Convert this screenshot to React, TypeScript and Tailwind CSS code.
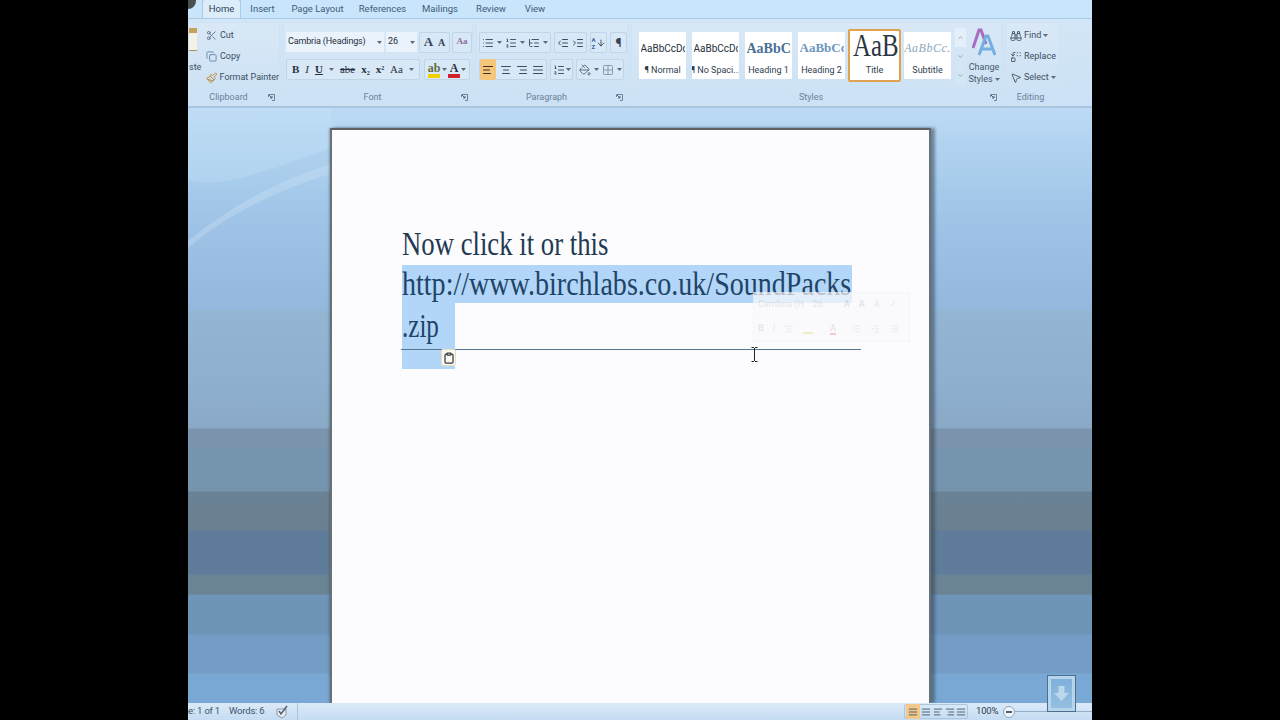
import React from 'react';
import {
  AlignCenter,
  AlignJustify,
  AlignLeft,
  AlignRight,
  ArrowDown,
  Binoculars,
  ChevronDown,
  ChevronUp,
  Clipboard,
  Copy,
  Grid2x2,
  IndentDecrease,
  IndentIncrease,
  List,
  ListOrdered,
  ListTree,
  MousePointer2,
  PaintBucket,
  Paintbrush,
  Replace,
  Scissors,
} from 'lucide-react';

const tabs = ['Home', 'Insert', 'Page Layout', 'References', 'Mailings', 'Review', 'View'];

const Caret = () => (
  <svg width="5" height="3" viewBox="0 0 5 3" className="shrink-0">
    <path d="M0 0h5L2.500 3z" fill="#5a6b80" />
  </svg>
);

const Launcher = () => (
  <svg width="7" height="7" viewBox="0 0 7 7" className="shrink-0">
    <path d="M0.500 3V0.500H6.500V6.500H4" fill="none" stroke="#6f8298" />
    <path d="M1 1l3 3M4 2v2H2" fill="none" stroke="#52667c" />
  </svg>
);

const Group = ({
  label,
  width,
  launcher,
  children,
}: {
  label: string;
  width: string;
  launcher?: boolean;
  children: React.ReactNode;
}) => (
  <div className={`${width} h-[83px] shrink-0 flex flex-col rounded-[3px] border border-[#cfe2f2] bg-gradient-to-b from-[#d9e8f6] to-[#cbe1f5]`}>
    <div className="flex-1 min-h-0">{children}</div>
    <div className="h-[16px] pt-[3px] flex items-center text-[9px] text-[#6c8199] pr-[4px]">
      <span className="flex-1 text-center">{label}</span>
      {launcher && <Launcher />}
    </div>
  </div>
);

const ClipRow = ({
  icon,
  text,
  gap = 'gap-[3px]',
  caret,
}: {
  icon: React.ReactNode;
  text: string;
  gap?: string;
  caret?: boolean;
}) => (
  <div className={`flex items-center h-[21px] text-[9px] text-[#3c4e62] ${gap}`}>
    {icon}
    <span className="whitespace-nowrap">{text}</span>
    {caret && <Caret />}
  </div>
);

const ToolBox = ({ className, children }: { className: string; children: React.ReactNode }) => (
  <div className={`h-[21px] flex items-center rounded-[2px] border border-[#c0d5e8] bg-[#d9e8f6] ${className}`}>{children}</div>
);

const StyleTile = ({
  sample,
  label,
  sampleClass,
}: {
  sample: string;
  label: string;
  sampleClass: string;
}) => (
  <div className="w-[47px] h-[47px] shrink-0 bg-white flex flex-col items-center overflow-hidden">
    <div className={`h-[32px] w-[44px] flex items-center overflow-hidden whitespace-nowrap ${sampleClass}`}>{sample}</div>
    <div className="text-[9px] leading-[12px] text-[#2e3d4f] whitespace-nowrap">{label}</div>
  </div>
);

const Ribbon = () => (
  <div className="shrink-0">
    <div className="h-[19px] flex items-end bg-[#c9e5fb] border-b border-[#aacbe6] relative">
      <div className="absolute left-0 top-0 w-[8px] h-[9px] rounded-br-full bg-[#4a4f4f]" />
      <div className="ml-[14px] h-[19px] w-[39px] flex items-center justify-center rounded-t-[3px] bg-[#dcecf9] border border-b-0 border-[#a9cbe6] text-[9.500px] text-[#2c4058]">
        Home
      </div>
      {tabs.slice(1).map((tab, i) => (
        <div
          key={tab}
          className={`h-[18px] flex items-center justify-center text-[9.500px] text-[#3f5b78] ${
            ['w-[43px]', 'w-[67px]', 'w-[63px]', 'w-[52px]', 'w-[50px]', 'w-[38px]'][i]
          }`}
        >
          {tab}
        </div>
      ))}
    </div>
    <div className="h-[89px] flex gap-[3px] pt-[3px] bg-gradient-to-b from-[#d3e6f7] to-[#cbe1f5] border-b-2 border-[#a9c5dd]">
      <Group label="Clipboard" width="w-[92px]" launcher>
        <div className="relative h-full">
          <div className="absolute left-0 top-[5px] w-[8px] h-[23px] bg-[#f4f1e6] border-b border-[#a89060]">
            <div className="h-[5px] bg-[#c9a05a]" />
          </div>
          <div className="absolute left-0 top-[38px] text-[9px] text-[#3c4e62]">ste</div>
          <div className="pl-[17px] pt-[2px]">
            <ClipRow icon={<Scissors size={11} color="#5f6f96" />} text="Cut" />
            <ClipRow icon={<Copy size={11} color="#6b87a8" />} text="Copy" />
            <ClipRow icon={<Paintbrush size={12} color="#b68a33" />} text="Format Painter" gap="gap-[2px]" />
          </div>
        </div>
      </Group>

      <Group label="Font" width="w-[190px]" launcher>
        <div className="pl-[2px] pt-[9px] flex flex-col gap-[7px]">
          <div className="flex items-center gap-[2px] h-[20px]">
            <div className="w-[98px] h-[20px] bg-[#eaf3fb] flex items-center justify-between px-[2px] text-[9px] tracking-[-0.15px] text-[#25303c]">
              <span className="whitespace-nowrap">Cambria (Headings)</span>
              <Caret />
            </div>
            <div className="w-[31px] h-[20px] bg-[#eaf3fb] flex items-center justify-between px-[2px] text-[9px] text-[#25303c]">
              <span>26</span>
              <Caret />
            </div>
            <ToolBox className="w-[31px] justify-center gap-[5px] font-['Liberation_Serif',serif] text-[#33435a]">
              <span className="text-[13px] font-bold">A</span>
              <span className="text-[10px] font-bold">A</span>
            </ToolBox>
            <ToolBox className="w-[20px] justify-center font-['Liberation_Serif',serif] text-[9px] font-bold text-[#8a6f9b]">
              Aa
            </ToolBox>
          </div>
          <div className="flex gap-[4px]">
            <ToolBox className="w-[134px] justify-around px-[2px] font-['Liberation_Serif',serif] text-[11px] text-[#26323f]">
              <b>B</b>
              <i>I</i>
              <b className="underline">U</b>
              <Caret />
              <span className="line-through">abe</span>
              <b>x<sub className="text-[6px]">2</sub></b>
              <b>x<sup className="text-[6px]">2</sup></b>
              <span>Aa</span>
              <Caret />
            </ToolBox>
            <ToolBox className="w-[46px] justify-around px-[2px] font-['Liberation_Serif',serif] text-[12px]">
              <span className="flex flex-col items-center leading-[12px]">
                <span className="text-[#5d6e3c] font-bold">ab</span>
                <span className="w-[12px] h-[4px] bg-[#f0d000]" />
              </span>
              <Caret />
              <span className="flex flex-col items-center leading-[12px]">
                <span className="text-[#26323f] font-bold">A</span>
                <span className="w-[12px] h-[4px] bg-[#d0202c]" />
              </span>
              <Caret />
            </ToolBox>
          </div>
        </div>
      </Group>

      <Group label="Paragraph" width="w-[152px]" launcher>
        <div className="pl-[2px] pt-[9px] flex flex-col gap-[5px]">
          <div className="flex gap-[3px]">
            <ToolBox className="w-[72px] justify-around">
              <List size={12} color="#44586e" />
              <Caret />
              <ListOrdered size={12} color="#44586e" />
              <Caret />
              <ListTree size={12} color="#44586e" />
              <Caret />
            </ToolBox>
            <ToolBox className="w-[33px] justify-around">
              <IndentDecrease size={12} color="#3b4c60" />
              <IndentIncrease size={12} color="#3b4c60" />
            </ToolBox>
            <ToolBox className="w-[17px] justify-center">
              <span className="flex flex-col text-[6px] leading-[7px] font-bold text-[#3b66a0]">
                <span>A</span>
                <span>Z</span>
              </span>
              <ArrowDown size={10} color="#333f4e" />
            </ToolBox>
            <ToolBox className="w-[17px] justify-center text-[12px] font-bold text-[#3a4656]">¶</ToolBox>
          </div>
          <div className="flex gap-[3px] pt-[1px]">
            <ToolBox className="w-[68px] justify-between pr-[2px]">
              <span className="w-[16px] h-[21px] flex items-center justify-center rounded-[2px] bg-[#f5c679]">
                <AlignLeft size={12} color="#3b3222" />
              </span>
              <AlignCenter size={12} color="#3b4c60" />
              <AlignRight size={12} color="#3b4c60" />
              <AlignJustify size={12} color="#3b4c60" />
            </ToolBox>
            <ToolBox className="w-[23px] justify-center gap-[1px]">
              <ListOrdered size={12} color="#44586e" />
              <Caret />
            </ToolBox>
            <ToolBox className="w-[48px] justify-around">
              <PaintBucket size={12} color="#59708a" />
              <Caret />
              <Grid2x2 size={12} color="#8a99aa" />
              <Caret />
            </ToolBox>
          </div>
        </div>
      </Group>

      <Group label="Styles" width="w-[371px]" launcher>
        <div className="flex h-full pl-[7px] pt-[6px]">
          <div className="flex gap-[6px] h-[50px] pt-[3px]">
            <StyleTile sample="AaBbCcDc" label="¶ Normal" sampleClass="text-[10px] text-[#26303c]" />
            <StyleTile sample="AaBbCcDc" label="¶ No Spaci..." sampleClass="text-[10px] text-[#26303c]" />
            <StyleTile
              sample="AaBbCc"
              label="Heading 1"
              sampleClass="text-[14px] font-bold font-['Liberation_Serif',serif] text-[#4a6f95]"
            />
            <StyleTile
              sample="AaBbCc"
              label="Heading 2"
              sampleClass="text-[13px] font-bold font-['Liberation_Serif',serif] text-[#6d97c1]"
            />
          </div>
          <div className="w-[53px] h-[53px] ml-[3px] shrink-0 border-2 border-[#e0a24e] rounded-[2px] bg-white flex flex-col items-center overflow-hidden">
            <div className="h-[30px] w-[47px] pl-[2px] overflow-hidden whitespace-nowrap font-['Liberation_Serif',serif] text-[31px] leading-[30px] text-[#2a3644]">
              <span className="inline-block origin-left scale-x-[0.8]">AaB</span>
            </div>
            <div className="text-[9px] leading-[18px] text-[#2e3d4f]">Title</div>
          </div>
          <div className="pl-[3px] pt-[3px] h-[50px] shrink-0">
            <div className="w-[47px] h-[47px] bg-white flex flex-col items-center overflow-hidden">
              <div className="h-[32px] flex items-center whitespace-nowrap font-['Liberation_Serif',serif] italic text-[12px] tracking-[0.5px] text-[#8aa8c0]">
                AaBbCc.
              </div>
              <div className="text-[9px] leading-[12px] text-[#2e3d4f]">Subtitle</div>
            </div>
          </div>
          <div className="ml-[4px] mt-[-1px] w-[11px] h-[57px] shrink-0 flex flex-col">
            <div className="h-[19px] flex items-center justify-center bg-[#e4eff9]"><ChevronUp size={7} color="#6d8097" /></div>
            <div className="h-[19px] flex items-center justify-center bg-[#d4e5f5]"><ChevronDown size={7} color="#6d8097" /></div>
            <div className="h-[19px] flex items-center justify-center bg-[#d4e5f5]"><ChevronDown size={7} color="#6d8097" /></div>
          </div>
          <div className="w-[36px] shrink-0 flex flex-col items-center text-[9px] leading-[12px] text-[#45586c]">
            <svg width="24" height="29" viewBox="0 0 24 29" className="mt-[-1px]">
              <path d="M1 20L7 2h2l5 14" fill="none" stroke="#a86cc0" strokeWidth="3" />
              <path d="M7 27L14 8h2l7 19M10 21h10" fill="none" stroke="#76aede" strokeWidth="3" />
            </svg>
            <span className="mt-[4px]">Change</span>
            <span className="flex items-center gap-[2px]">Styles <Caret /></span>
          </div>
        </div>
      </Group>

      <Group label="Editing" width="w-[55px]">
        <div className="pl-[4px] pt-[2px]">
          <ClipRow icon={<Binoculars size={12} color="#4a5a6c" />} text="Find" gap="gap-[2px]" caret />
          <ClipRow icon={<Replace size={12} color="#4f5f66" />} text="Replace" gap="gap-[2px]" />
          <ClipRow icon={<MousePointer2 size={12} color="#55606e" />} text="Select" gap="gap-[2px]" caret />
        </div>
      </Group>
    </div>
  </div>
);

const MiniToolbar = () => (
  <div className="absolute left-[421px] top-[162px] w-[157px] h-[50px] bg-[#fafafc] border border-[#f3f3f6] opacity-70 flex flex-col justify-around px-[4px] text-[9px] text-[#dcdde2]">
    <div className="flex gap-[9px] whitespace-nowrap">
      <span>Cambria (H</span>
      <span>26</span>
      <b className="ml-[12px]">A</b>
      <b>A</b>
      <span>A</span>
      <span>✓</span>
    </div>
    <div className="flex items-center gap-[9px]">
      <b>B</b>
      <i>I</i>
      <AlignCenter size={10} color="#dcdde2" />
      <span className="w-[10px] h-[10px] border-b-2 border-[#ece7a8]" />
      <span className="ml-[8px] text-[#e6c8d0] border-b-2 border-[#efb4bc] leading-[10px]">A</span>
      <IndentDecrease size={10} color="#dcdde2" className="ml-[6px]" />
      <IndentIncrease size={10} color="#dcdde2" />
      <List size={10} color="#dcdde2" />
    </div>
  </div>
);

const Page = () => (
  <div className="relative ml-[142px] w-[601px] h-[575px] shrink-0 bg-[#fcfbfd] border-t-2 border-l-2 border-r-2 border-t-[#5c6064] border-l-[#6b7074] border-r-[#6b7074] shadow-[4px_0_3px_rgba(50,70,90,0.55),-1px_0_2px_rgba(50,70,90,0.4)]">
    <div className="pl-[70px] pt-[95px] w-[530px] font-['Liberation_Serif',serif] text-[33px] text-[#1f3a52]">
      <div className="h-[39.500px] leading-[39.500px] whitespace-nowrap">
        <span className="inline-block origin-left scale-x-[0.81]">Now click it or this</span>
      </div>
      <div className="w-[450px] h-[38px] leading-[38px] bg-[#b2d6f7] whitespace-nowrap text-[#1f4468]">
        <span className="inline-block origin-left scale-x-[0.85]">http://www.birchlabs.co.uk/SoundPacks</span>
      </div>
      <div className="w-[53px] h-[46px] leading-[46px] bg-[#b2d6f7] text-[#1f4468]">
        <span className="inline-block origin-left scale-x-[0.76]">.zip</span>
      </div>
      <div className="w-[53px] h-[20px] bg-[#b2d6f7]" />
    </div>
    {/* overlays: rule under the text, paste options, mini toolbar and the text cursor */}
    <div className="absolute left-[69px] top-[219px] w-[460px] h-px bg-[#56788f]" />
    <div className="absolute left-[109px] top-[219px] w-[15px] h-[17px] bg-[#fbf8ef] border border-[#e8dcc0] rounded-[2px] flex items-center justify-center">
      <Clipboard size={12} color="#333b45" strokeWidth={2.500} />
    </div>
    <MiniToolbar />
    <svg width="7" height="15" viewBox="0 0 7 15" className="absolute left-[419px] top-[217px]">
      <path d="M0.500 0.500h2.500M4 0.500h2.500M3.500 1v13M0.500 14.500h2.500M4 14.500h2.500" fill="none" stroke="#222" />
    </svg>
  </div>
);

const StatusBar = () => (
  <div className="h-[17px] shrink-0 flex items-center bg-gradient-to-b from-[#dbeaf8] to-[#c4dcf2] text-[9.500px] tracking-[-0.2px] text-[#3f556c] overflow-hidden">
    <span className="w-[41px] whitespace-nowrap">e: 1 of 1</span>
    <span className="w-[46px] whitespace-nowrap">Words: 6</span>
    <svg width="14" height="14" viewBox="0 0 14 14" className="shrink-0">
      <path d="M2 4h9v6l-4 3-5-3z" fill="#e7eef5" stroke="#8b98a6" />
      <path d="M4 6l2 3 6-8" fill="none" stroke="#55606e" strokeWidth="1.500" />
    </svg>
    <span className="ml-[8px] w-px h-full bg-[#aac6de]" />
    <div className="flex-1" />
    <div className="w-[64px] h-[15px] flex items-center justify-around rounded-[2px] border border-[#aec5db] text-[#3a4a5c]">
      <span className="h-[15px] w-[14px] flex items-center justify-center bg-[#f2c98a]"><AlignJustify size={10} color="#3a4a5c" /></span>
      <AlignJustify size={10} color="#3a4a5c" />
      <AlignLeft size={10} color="#3a4a5c" />
      <AlignRight size={10} color="#3a4a5c" />
      <AlignJustify size={10} color="#3a4a5c" />
    </div>
    <span className="ml-[8px] w-[25px] whitespace-nowrap text-[#2c3e52]">100%</span>
    <span className="ml-[2px] w-[12px] h-[12px] rounded-full border border-[#92a5b8] bg-[#eef5fb] flex items-center justify-center">
      <span className="w-[6px] h-[2px] bg-[#4d5f73]" />
    </span>
    <span className="w-[77px] h-px bg-[#92aec8] shrink-0" />
  </div>
);

const App = () => (
  <div className="w-[1280px] h-[720px] bg-black overflow-hidden flex justify-center font-['Roboto','Liberation_Sans',Arial,sans-serif]">
    <div className="relative w-[904px] h-full flex flex-col bg-[linear-gradient(180deg,#bcdaf5_108px,#a8cceb_180px,#a0c4e8_218px,#94b7dd_310px,#93b6d3_311px,#8fb0cf_377px,#89a9c6_428px,#7c93ae_429px,#7c93ae_448px,#7594ae_449px,#7594ae_491px,#6a8295_492px,#68808f_530px,#5f7d9b_531px,#5f7d9b_574px,#6a8395_575px,#6a8395_594px,#6e94b8_595px,#6e94b8_634px,#739dc5_635px,#739dc5_673px,#7aa8d4_674px,#7aa8d4_703px)]">
      <Ribbon />
      <div className="relative flex-1 min-h-0 flex overflow-hidden pt-[20px]">
        <svg width="143" height="140" viewBox="0 0 143 140" className="absolute left-0 top-0">
          <path d="M0 72C30 80 60 70 143 40V0H0z" fill="#c8e3fa" opacity="0.3" />
          <path d="M0 133C40 100 90 72 143 56V66C95 80 40 105 0 140z" fill="#cfe3f4" opacity="0.35" />
        </svg>
        <Page />
      </div>
      <StatusBar />
      {/* the floating thumbnail sits over the document background and status bar */}
      <div className="absolute left-[859px] top-[675px] w-[29px] h-[37px] border border-[#4c6f8f] bg-[#b6d4ea] p-[3px]">
        <div className="w-full h-full bg-gradient-to-b from-[#7fb0dc] to-[#94bedf] flex items-center justify-center">
          <svg width="15" height="15" viewBox="0 0 15 15">
            <path d="M4.500 0h6v7H15l-7.500 8L0 7h4.500z" fill="#bcd6ea" />
          </svg>
        </div>
      </div>
    </div>
  </div>
);

export default App;
